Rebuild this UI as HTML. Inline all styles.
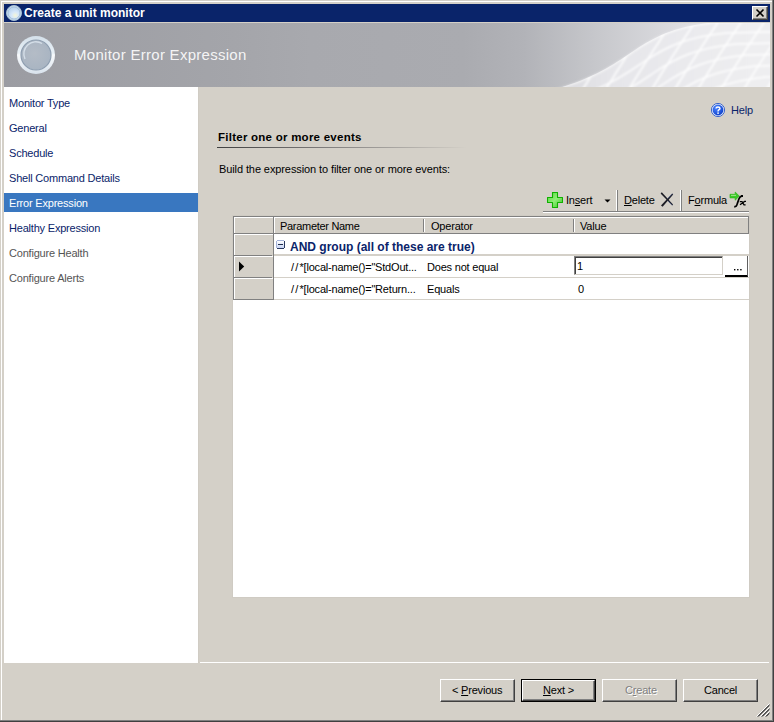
<!DOCTYPE html>
<html><head><meta charset="utf-8">
<style>
*{margin:0;padding:0;box-sizing:border-box}
html,body{width:774px;height:722px;overflow:hidden;background:#d4d0c8;font-family:"Liberation Sans",sans-serif;font-size:11px;color:#000}
.a{position:absolute}
.t{position:absolute;white-space:nowrap;line-height:13px;letter-spacing:-0.2px}
</style></head><body>
<!-- window frame -->
<div class="a" style="left:0;top:0;width:774px;height:722px;background:#d4d0c8"></div>
<div class="a" style="left:1px;top:1px;width:771px;height:1px;background:#fff"></div>
<div class="a" style="left:1px;top:1px;width:1px;height:719px;background:#fff"></div>
<div class="a" style="left:772px;top:0;width:1px;height:721px;background:#808080"></div>
<div class="a" style="left:773px;top:0;width:1px;height:722px;background:#404040"></div>
<div class="a" style="left:0;top:720px;width:773px;height:1px;background:#808080"></div>
<div class="a" style="left:0;top:721px;width:774px;height:1px;background:#404040"></div>

<!-- title bar -->
<div class="a" style="left:4px;top:4px;width:766px;height:18px;background:#0a246a"></div>
<svg class="a" style="left:5px;top:4px" width="18" height="18" viewBox="0 0 18 18">
 <defs><radialGradient id="ti" cx="0.6" cy="0.7" r="0.6"><stop offset="0" stop-color="#f4f6d8"/><stop offset="0.5" stop-color="#d6e8fa"/><stop offset="1" stop-color="#bcd6f0"/></radialGradient></defs>
 <circle cx="9" cy="9" r="7.5" fill="#c8dcec" stroke="#a8c0d4" stroke-width="1"/>
 <circle cx="9" cy="9" r="6" fill="url(#ti)" stroke="#9ab8d6" stroke-width="0.8"/>
</svg>
<div class="t" style="left:24px;top:7px;color:#fff;font-weight:bold;font-size:12px;letter-spacing:0">Create a unit monitor</div>
<!-- close button -->
<div class="a" style="left:752px;top:6px;width:16px;height:14px;background:#d4d0c8;border-top:1px solid #fff;border-left:1px solid #fff;border-right:1px solid #404040;border-bottom:1px solid #404040"></div>
<div class="a" style="left:753px;top:7px;width:14px;height:12px;border-right:1px solid #808080;border-bottom:1px solid #808080"></div>
<svg class="a" style="left:752px;top:6px" width="16" height="14" viewBox="0 0 16 14">
 <path d="M4.5 3.5 L11.5 10.5 M11.5 3.5 L4.5 10.5" stroke="#000" stroke-width="1.6"/>
</svg>

<!-- header -->
<div class="a" style="left:4px;top:22px;width:766px;height:1px;background:#d4d0c8"></div>
<svg class="a" style="left:4px;top:23px" width="766" height="64" viewBox="0 0 766 64">
 <defs>
  <linearGradient id="hg" x1="0" y1="0" x2="1" y2="0">
   <stop offset="0" stop-color="#9b9ca2"/><stop offset="0.3" stop-color="#a4a5aa"/><stop offset="0.4" stop-color="#a8a9ae"/><stop offset="0.6" stop-color="#aaabb0"/><stop offset="0.68" stop-color="#b2b3b8"/><stop offset="0.78" stop-color="#c8c9cd"/><stop offset="0.88" stop-color="#dcdce0"/><stop offset="1" stop-color="#e6e6ea"/>
  </linearGradient>
  <linearGradient id="mg" x1="0" y1="0" x2="1" y2="0">
   <stop offset="0" stop-color="#d8d8dc"/><stop offset="0.3" stop-color="#e6e6ea"/><stop offset="1" stop-color="#f0f0f2"/>
  </linearGradient>
  <clipPath id="mc"><path d="M536 70 C588 58 610 41 631 27 C652 13 672 3 712 -1 L790 -3 L790 70 Z"/></clipPath>
  <filter id="bl" x="-5%" y="-5%" width="110%" height="110%"><feGaussianBlur stdDeviation="0.9"/></filter>
 </defs>
 <rect width="766" height="64" fill="url(#hg)"/>
 <path d="M536 70 C588 58 610 41 631 27 C652 13 672 3 712 -1 L790 -3 L790 70 Z" fill="url(#mg)" filter="url(#bl)"/>
 <g clip-path="url(#mc)"><g fill="none" stroke="#ffffff" stroke-opacity="0.95" stroke-width="1.5" filter="url(#bl)">
  <path d="M536 70 C588 58 610 41 631 27 C652 13 672 3 712 -1 L790 -3" stroke-width="2"/>
  <path transform="translate(10 11)" d="M536 70 C588 58 610 41 631 27 C652 13 672 3 712 -1 L790 -3"/>
  <path transform="translate(20 22)" d="M536 70 C588 58 610 41 631 27 C652 13 672 3 712 -1 L790 -3"/>
  <path transform="translate(30 33)" d="M536 70 C588 58 610 41 631 27 C652 13 672 3 712 -1 L790 -3"/>
  <path transform="translate(40 44)" d="M536 70 C588 58 610 41 631 27 C652 13 672 3 712 -1 L790 -3"/>
  <path transform="translate(50 55)" d="M536 70 C588 58 610 41 631 27 C652 13 672 3 712 -1 L790 -3"/>
  <path transform="translate(60 66)" d="M536 70 C588 58 610 41 631 27 C652 13 672 3 712 -1 L790 -3"/>
  <path transform="translate(70 77)" d="M536 70 C588 58 610 41 631 27 C652 13 672 3 712 -1 L790 -3"/>
  <path d="M418 66 Q440 30 462 -2"/>
  <path d="M441 66 Q463 30 485 -2"/>
  <path d="M464 66 Q486 30 508 -2"/>
  <path d="M487 66 Q509 30 531 -2"/>
  <path d="M510 66 Q532 30 554 -2"/>
  <path d="M533 66 Q555 30 577 -2"/>
  <path d="M556 66 Q578 30 600 -2"/>
  <path d="M579 66 Q601 30 623 -2"/>
  <path d="M602 66 Q624 30 646 -2"/>
  <path d="M625 66 Q647 30 669 -2"/>
  <path d="M648 66 Q670 30 692 -2"/>
  <path d="M671 66 Q693 30 715 -2"/>
  <path d="M694 66 Q716 30 738 -2"/>
  <path d="M717 66 Q739 30 761 -2"/>
  <path d="M740 66 Q762 30 784 -2"/>
  <path d="M763 66 Q785 30 807 -2"/>
  <path d="M786 66 Q808 30 830 -2"/>
  <path d="M809 66 Q831 30 853 -2"/>
 </g></g>
</svg>
<svg class="a" style="left:16px;top:35px" width="40" height="40" viewBox="0 0 40 40">
 <defs>
  <linearGradient id="hr" x1="0" y1="0" x2="0" y2="1"><stop offset="0" stop-color="#d4e0ea"/><stop offset="0.45" stop-color="#e8f0f6"/><stop offset="0.5" stop-color="#f8fafc"/><stop offset="1" stop-color="#d8e2ec"/></linearGradient>
  <radialGradient id="hi" cx="0.45" cy="0.45" r="0.6"><stop offset="0" stop-color="#b4bcc6"/><stop offset="1" stop-color="#a8b4c2"/></radialGradient>
 </defs>
 <circle cx="20" cy="20" r="19" fill="url(#hr)"/>
 <circle cx="20" cy="20" r="15" fill="url(#hi)" stroke="#8e9eb0" stroke-width="1.2"/>
 <path d="M9 24 A12 12 0 0 1 26 8.5" fill="none" stroke="#d4dee8" stroke-width="1.4"/>
</svg>
<div class="t" style="left:74px;top:46px;color:rgba(255,255,255,0.9);font-size:15px;letter-spacing:0.28px;line-height:17px">Monitor Error Expression</div>

<!-- nav panel -->
<div class="a" style="left:4px;top:87px;width:194px;height:576px;background:#fff"></div>
<div class="a" style="left:198px;top:87px;width:1px;height:576px;background:#d0ccc4"></div>
<div class="a" style="left:4px;top:193px;width:194px;height:19px;background:#3977c0"></div>
<div class="t" style="left:9px;top:97px;color:#0a246a">Monitor Type</div>
<div class="t" style="left:9px;top:122px;color:#0a246a">General</div>
<div class="t" style="left:9px;top:147px;color:#0a246a">Schedule</div>
<div class="t" style="left:9px;top:172px;color:#0a246a">Shell Command Details</div>
<div class="t" style="left:9px;top:197px;color:#fff">Error Expression</div>
<div class="t" style="left:9px;top:222px;color:#0a246a">Healthy Expression</div>
<div class="t" style="left:9px;top:247px;color:#555">Configure Health</div>
<div class="t" style="left:9px;top:272px;color:#555">Configure Alerts</div>

<!-- bottom separator -->
<div class="a" style="left:200px;top:662px;width:569px;height:1px;background:#fff"></div>


<!-- content -->
<svg class="a" style="left:711px;top:103px" width="14" height="14" viewBox="0 0 14 14">
 <defs><radialGradient id="hb" cx="0.35" cy="0.3" r="0.8"><stop offset="0" stop-color="#4a84ff"/><stop offset="1" stop-color="#0a3cc8"/></radialGradient></defs>
 <circle cx="7" cy="7" r="6.6" fill="#e4ecfa" stroke="#2a58c8" stroke-width="0.9"/>
 <circle cx="7" cy="7" r="5.4" fill="url(#hb)"/>
 <path d="M5 5.4 C5 3.6 9 3.6 9 5.4 C9 6.8 7 6.6 7 8.4" fill="none" stroke="#fff" stroke-width="1.4"/>
 <rect x="6.3" y="9.4" width="1.5" height="1.5" fill="#fff"/>
</svg>
<div class="t" style="left:731px;top:104px;color:#0a246a">Help</div>

<div class="t" style="left:218px;top:131px;font-weight:bold;font-size:11.5px;letter-spacing:0.25px;color:#000">Filter one or more events</div>
<div class="a" style="left:217px;top:147px;width:250px;height:1px;background:linear-gradient(90deg,#404040 0%,#7a7878 40%,#d4d0c8 100%)"></div>
<div class="t" style="left:219px;top:163px;letter-spacing:-0.1px;color:#000">Build the expression to filter one or more events:</div>

<!-- toolbar -->
<svg class="a" style="left:547px;top:192px" width="16" height="16" viewBox="0 0 16 16">
 <defs><linearGradient id="gp" x1="0" y1="0" x2="1" y2="1"><stop offset="0" stop-color="#50d838"/><stop offset="0.5" stop-color="#90ee78"/><stop offset="1" stop-color="#38c820"/></linearGradient></defs>
 <path d="M5.5 0.5 H10.5 V5.5 H15.5 V10.5 H10.5 V15.5 H5.5 V10.5 H0.5 V5.5 H5.5 Z" fill="url(#gp)" stroke="#10b000" stroke-width="1.1" stroke-linejoin="round"/>
</svg>
<div class="t" style="left:566px;top:194px">In<u>s</u>ert</div>
<svg class="a" style="left:604px;top:199px" width="8" height="5" viewBox="0 0 8 5"><path d="M0.5 0.5 H6.5 L3.5 3.5 Z" fill="#000"/></svg>
<div class="a" style="left:616px;top:190px;width:1px;height:21px;background:#fff"></div>
<div class="a" style="left:617px;top:190px;width:1px;height:21px;background:#808080"></div>
<div class="t" style="left:624px;top:194px"><u>D</u>elete</div>
<svg class="a" style="left:656px;top:188px" width="24" height="24" viewBox="0 0 24 24">
 <path d="M4.6 5.6 L5.8 4.2 L17 16.6 L16.2 17.6 Z" fill="#1c1c24"/>
 <path d="M5 17.4 L6.6 18.8 L17.2 6.6 L16.2 5.6 Z" fill="#1c1c24"/>
 <path d="M11.5 10.8 L16.6 5.6 M11.8 12.6 L16.4 17.4" stroke="#5a7ad0" stroke-width="0.5" opacity="0.7"/>
</svg>
<div class="a" style="left:680px;top:190px;width:1px;height:21px;background:#fff"></div>
<div class="a" style="left:681px;top:190px;width:1px;height:21px;background:#808080"></div>
<div class="t" style="left:688px;top:194px">F<u>o</u>rmula</div>
<svg class="a" style="left:726px;top:188px" width="24" height="22" viewBox="0 0 24 22">
 <path d="M4 6.3 H9.2 V4 L13.3 8.1 L9.2 12.2 V9.9 H4 Z" fill="#3cc828" stroke="#2cb818" stroke-width="0.7" stroke-linejoin="round"/>
 <path d="M5 7.4 H10" stroke="#9ce888" stroke-width="1"/>
 <path d="M8.2 18.6 Q10.5 19.2 11.3 15.6 L13 10.8 Q13.8 8.6 15.6 8.2" fill="none" stroke="#000" stroke-width="1.7"/>
 <rect x="15" y="7" width="2" height="2" fill="#000"/>
 <path d="M13.8 13.6 H16 L18 16.8 H19.6 M14 16.8 L18.6 13.4 H20" fill="none" stroke="#000" stroke-width="1.3"/>
</svg>
<div class="a" style="left:543px;top:211px;width:206px;height:1px;background:#808080"></div>
<div class="a" style="left:543px;top:212px;width:206px;height:1px;background:#fff"></div>

<!-- grid -->
<div class="a" style="left:232px;top:215px;width:518px;height:383px;background:#cfcbc3"></div>
<div class="a" style="left:233px;top:216px;width:516px;height:381px;background:#fff"></div>
<!-- header row -->
<div class="a" style="left:233px;top:216px;width:516px;height:18px;background:#d4d0c8"></div>
<div class="a" style="left:233px;top:216px;width:516px;height:1px;background:#808080"></div>
<div class="a" style="left:233px;top:216px;width:1px;height:84px;background:#808080"></div>
<div class="a" style="left:234px;top:217px;width:514px;height:1px;background:#fff"></div>
<div class="a" style="left:234px;top:217px;width:1px;height:16px;background:#fff"></div>
<div class="a" style="left:234px;top:233px;width:515px;height:1px;background:#808080"></div>
<div class="a" style="left:748px;top:216px;width:1px;height:18px;background:#808080"></div>
<div class="a" style="left:273px;top:217px;width:1px;height:83px;background:#808080"></div>
<div class="a" style="left:274px;top:217px;width:1px;height:16px;background:#fff"></div>
<div class="a" style="left:423px;top:219px;width:1px;height:13px;background:#808080"></div>
<div class="a" style="left:424px;top:219px;width:1px;height:13px;background:#fff"></div>
<div class="a" style="left:573px;top:219px;width:1px;height:13px;background:#808080"></div>
<div class="a" style="left:574px;top:219px;width:1px;height:13px;background:#fff"></div>
<div class="t" style="left:280px;top:220px;letter-spacing:-0.3px">Parameter Name</div>
<div class="t" style="left:431px;top:220px">Operator</div>
<div class="t" style="left:580px;top:220px">Value</div>
<!-- row header cells -->
<div class="a" style="left:234px;top:234px;width:39px;height:66px;background:#d4d0c8"></div>
<div class="a" style="left:234px;top:234px;width:1px;height:66px;background:#fff"></div>
<div class="a" style="left:234px;top:234px;width:39px;height:1px;background:#fff"></div>
<div class="a" style="left:234px;top:255px;width:38px;height:1px;background:#808080"></div>
<div class="a" style="left:235px;top:256px;width:38px;height:1px;background:#fff"></div>
<div class="a" style="left:234px;top:277px;width:38px;height:1px;background:#808080"></div>
<div class="a" style="left:235px;top:278px;width:38px;height:1px;background:#fff"></div>
<div class="a" style="left:234px;top:299px;width:40px;height:1px;background:#808080"></div>
<svg class="a" style="left:239px;top:261px" width="6" height="11" viewBox="0 0 6 11"><path d="M0 0.5 L5.2 5.5 L0 10.5 Z" fill="#000"/></svg>
<!-- data rows -->
<div class="a" style="left:274px;top:254px;width:475px;height:2px;background:#d4d0c8"></div>
<div class="a" style="left:274px;top:277px;width:475px;height:1px;background:#d4d0c8"></div>
<div class="a" style="left:274px;top:299px;width:475px;height:1px;background:#d4d0c8"></div>
<svg class="a" style="left:276px;top:240px" width="9" height="9" viewBox="0 0 9 9" shape-rendering="crispEdges">
 <defs><linearGradient id="cb" x1="0" y1="0" x2="0" y2="1"><stop offset="0" stop-color="#ffffff"/><stop offset="1" stop-color="#c8d4f4"/></linearGradient></defs>
 <rect x="1" y="1" width="7" height="7" fill="url(#cb)"/>
 <rect x="1" y="0" width="7" height="1" fill="#a4b2d8"/>
 <rect x="0" y="1" width="1" height="7" fill="#a4b2d8"/>
 <rect x="8" y="1" width="1" height="7" fill="#2a3a60"/>
 <rect x="1" y="8" width="7" height="1" fill="#2a3a60"/>
 <rect x="2" y="4" width="5" height="1" fill="#1e2e4e"/>
</svg>
<div class="t" style="left:290px;top:241px;font-weight:bold;font-size:12px;letter-spacing:0;color:#0a246a">AND group (all of these are true)</div>
<div class="t" style="left:291px;top:261px"><span style="letter-spacing:1.2px">//</span>*[local-name()="StdOut...</div>
<div class="t" style="left:427px;top:261px">Does not equal</div>
<div class="t" style="left:291px;top:283px"><span style="letter-spacing:1.2px">//</span>*[local-name()="Return...</div>
<div class="t" style="left:427px;top:283px">Equals</div>
<div class="t" style="left:578px;top:283px">0</div>
<!-- textbox -->
<div class="a" style="left:574px;top:256px;width:149px;height:19px;background:#fff;border-top:1px solid #808080;border-left:1px solid #808080;border-right:1px solid #d4d0c8;border-bottom:1px solid #d4d0c8"></div>
<div class="a" style="left:575px;top:257px;width:147px;height:17px;border-top:1px solid #404040;border-left:1px solid #404040"></div>
<div class="t" style="left:577px;top:260px">1</div>
<!-- ellipsis button -->
<div class="a" style="left:725px;top:256px;width:23px;height:21px;background:#fff;border-right:1px solid #606060;border-bottom:2px solid #000"></div>
<svg class="a" style="left:733px;top:268px" width="10" height="3" viewBox="0 0 10 3"><rect x="1" y="1" width="1.4" height="1.4" fill="#000"/><rect x="4.1" y="1" width="1.4" height="1.4" fill="#000"/><rect x="7.2" y="1" width="1.4" height="1.4" fill="#000"/></svg>

<!-- buttons -->
<div class="a" style="left:440px;top:679px;width:75px;height:23px;border-top:1px solid #fff;border-left:1px solid #fff;border-right:1px solid #404040;border-bottom:1px solid #404040;background:#d4d0c8"></div>
<div class="a" style="left:441px;top:680px;width:73px;height:21px;border-right:1px solid #808080;border-bottom:1px solid #808080"></div>
<div class="t" style="left:452px;top:684px">&lt; <u>P</u>revious</div>

<div class="a" style="left:521px;top:679px;width:75px;height:23px;border:1px solid #000;background:#d4d0c8"></div>
<div class="a" style="left:522px;top:680px;width:73px;height:21px;border-top:1px solid #fff;border-left:1px solid #fff;border-right:1px solid #404040;border-bottom:1px solid #404040"></div>
<div class="a" style="left:523px;top:681px;width:71px;height:19px;border-right:1px solid #808080;border-bottom:1px solid #808080"></div>
<div class="t" style="left:543px;top:684px"><u>N</u>ext &gt;</div>

<div class="a" style="left:602px;top:679px;width:75px;height:23px;border-top:1px solid #fff;border-left:1px solid #fff;border-right:1px solid #404040;border-bottom:1px solid #404040;background:#d4d0c8"></div>
<div class="a" style="left:603px;top:680px;width:73px;height:21px;border-right:1px solid #808080;border-bottom:1px solid #808080"></div>
<div class="t" style="left:626px;top:685px;color:#fff">C<u>r</u>eate</div>
<div class="t" style="left:625px;top:684px;color:#808080">C<u>r</u>eate</div>

<div class="a" style="left:683px;top:679px;width:75px;height:23px;border-top:1px solid #fff;border-left:1px solid #fff;border-right:1px solid #404040;border-bottom:1px solid #404040;background:#d4d0c8"></div>
<div class="a" style="left:684px;top:680px;width:73px;height:21px;border-right:1px solid #808080;border-bottom:1px solid #808080"></div>
<div class="t" style="left:704px;top:684px">Cancel</div>

<!-- size grip -->
<svg class="a" style="left:754px;top:701px" width="18" height="18" viewBox="0 0 18 18">
 <g stroke-width="1" fill="none">
  <path d="M2.5 15.5 L15.5 2.5" stroke="#fff"/>
  <path d="M3.5 15.5 L15.5 3.5 M4.5 15.5 L15.5 4.5" stroke="#585858"/>
  <path d="M6.5 15.5 L15.5 6.5" stroke="#fff"/>
  <path d="M7.5 15.5 L15.5 7.5 M8.5 15.5 L15.5 8.5" stroke="#585858"/>
  <path d="M10.5 15.5 L15.5 10.5" stroke="#fff"/>
  <path d="M11.5 15.5 L15.5 11.5 M12.5 15.5 L15.5 12.5" stroke="#585858"/>
 </g>
</svg>
</body></html>
